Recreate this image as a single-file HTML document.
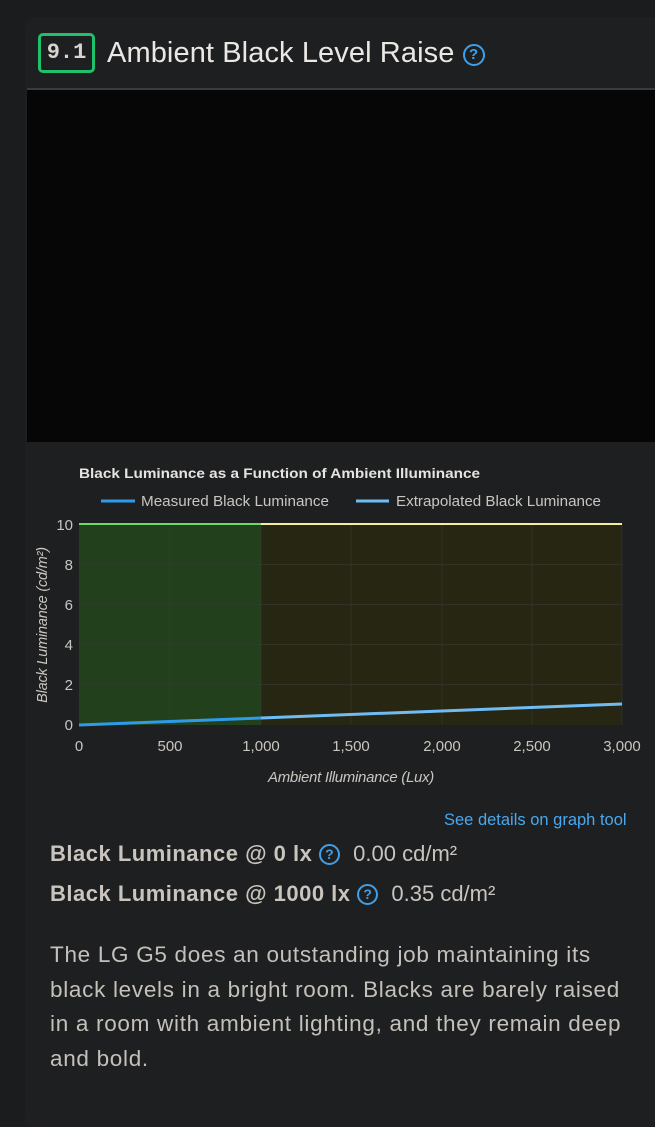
<!DOCTYPE html>
<html><head><meta charset="utf-8"><style>
*{margin:0;padding:0;box-sizing:border-box}
body{width:655px;height:1119px;background:#1b1c1e;font-family:"Liberation Sans",sans-serif;position:relative;overflow:hidden}
.card{position:absolute;left:25px;top:17px;width:640px;height:1110px;background:#1e1f21;border-radius:10px}
.a{position:absolute;white-space:nowrap}
.badge{left:38px;top:33px;width:57px;height:40px;border:3px solid #1fc26a;border-radius:5px;color:#d8d5d0;font:bold 22px "Liberation Mono",monospace;text-align:center;line-height:34px}
.h1{left:107px;top:34px;color:#eae8e4;font-size:29px;line-height:38px;letter-spacing:0.1px}
.q{display:inline-block;border:2px solid #3ea0ea;border-radius:50%;color:#3ea0ea;font-weight:bold;text-align:center;letter-spacing:0}
.img{left:27px;top:88px;width:628px;height:354px;background:#060607;border-top:2px solid #3a3b3d}
.b{color:#c9c4bd;font-weight:bold;font-size:22px;letter-spacing:0.5px}
.v{color:#c9c4bd;font-size:22px;font-weight:normal;letter-spacing:0}
.p{left:50px;top:938px;width:640px;color:#c4c0ba;font-size:22.5px;line-height:34.5px;letter-spacing:0.7px}
</style></head><body>
<div class="card"></div>
<div class="a badge">9.1</div>
<div class="a h1">Ambient Black Level Raise <span class="q" style="width:22px;height:22px;font-size:15px;line-height:18px;vertical-align:3px">?</span></div>
<div class="a img"></div>
<svg class="a" style="left:0;top:440px" width="655" height="350" font-family="Liberation Sans, sans-serif">
<text x="79" y="38" fill="#e6e4e0" font-size="14" font-weight="bold" textLength="401" lengthAdjust="spacingAndGlyphs">Black Luminance as a Function of Ambient Illuminance</text>
<line x1="101" y1="61" x2="135" y2="61" stroke="#2e9be8" stroke-width="3"/>
<text x="141" y="66" fill="#c9c6c0" font-size="15" textLength="188" lengthAdjust="spacingAndGlyphs">Measured Black Luminance</text>
<line x1="356" y1="61" x2="389" y2="61" stroke="#6fbcf5" stroke-width="3"/>
<text x="396" y="66" fill="#c9c6c0" font-size="15" textLength="205" lengthAdjust="spacingAndGlyphs">Extrapolated Black Luminance</text>
<rect x="79" y="84" width="182" height="201" fill="#22401c"/>
<rect x="261" y="84" width="361" height="201" fill="#272612"/>
<g stroke="#3a3a36" stroke-width="1" opacity="0.6">
<line x1="79" y1="124.5" x2="622" y2="124.5"/><line x1="79" y1="164.5" x2="622" y2="164.5"/><line x1="79" y1="204.5" x2="622" y2="204.5"/><line x1="79" y1="244.5" x2="622" y2="244.5"/>
<line x1="170" y1="84" x2="170" y2="285"/><line x1="261" y1="84" x2="261" y2="285"/><line x1="351" y1="84" x2="351" y2="285"/><line x1="442" y1="84" x2="442" y2="285"/><line x1="532" y1="84" x2="532" y2="285"/><line x1="622" y1="84" x2="622" y2="285"/>
</g>
<line x1="79" y1="84" x2="261" y2="84" stroke="#6fd86a" stroke-width="2"/>
<line x1="261" y1="84" x2="622" y2="84" stroke="#f3eea0" stroke-width="2"/>
<line x1="79" y1="285" x2="261" y2="278" stroke="#2e9be8" stroke-width="3"/>
<line x1="261" y1="278" x2="622" y2="264" stroke="#6fbcf5" stroke-width="3"/>
<g fill="#c9c6c0" font-size="15" text-anchor="end">
<text x="73" y="90">10</text><text x="73" y="130">8</text><text x="73" y="170">6</text><text x="73" y="210">4</text><text x="73" y="250">2</text><text x="73" y="290">0</text>
</g>
<g fill="#c9c6c0" font-size="15" text-anchor="middle">
<text x="79" y="311">0</text><text x="170" y="311">500</text><text x="261" y="311">1,000</text><text x="351" y="311">1,500</text><text x="442" y="311">2,000</text><text x="532" y="311">2,500</text><text x="622" y="311">3,000</text>
</g>
<text x="351" y="342" fill="#c9c6c0" font-size="15" font-style="italic" text-anchor="middle" letter-spacing="-0.3">Ambient Illuminance (Lux)</text>
<text transform="translate(47,185) rotate(-90)" fill="#c9c6c0" font-size="14.5" font-style="italic" text-anchor="middle" letter-spacing="-0.2">Black Luminance (cd/m²)</text>
</svg>
<div class="a" style="left:444px;top:811px;color:#4aa8ec;font-size:16.5px;letter-spacing:0px">See details on graph tool</div>
<div class="a b" style="left:50px;top:841px">Black Luminance @ 0 lx <span class="q" style="width:21px;height:21px;font-size:14px;line-height:17px;vertical-align:2px">?</span>&nbsp; <span class="v">0.00 cd/m²</span></div>
<div class="a b" style="left:50px;top:881px">Black Luminance @ 1000 lx <span class="q" style="width:21px;height:21px;font-size:14px;line-height:17px;vertical-align:2px">?</span>&nbsp; <span class="v">0.35 cd/m²</span></div>
<div class="a p">The LG G5 does an outstanding job maintaining its<br>black levels in a bright room. Blacks are barely raised<br>in a room with ambient lighting, and they remain deep<br>and bold.</div>
</body></html>
